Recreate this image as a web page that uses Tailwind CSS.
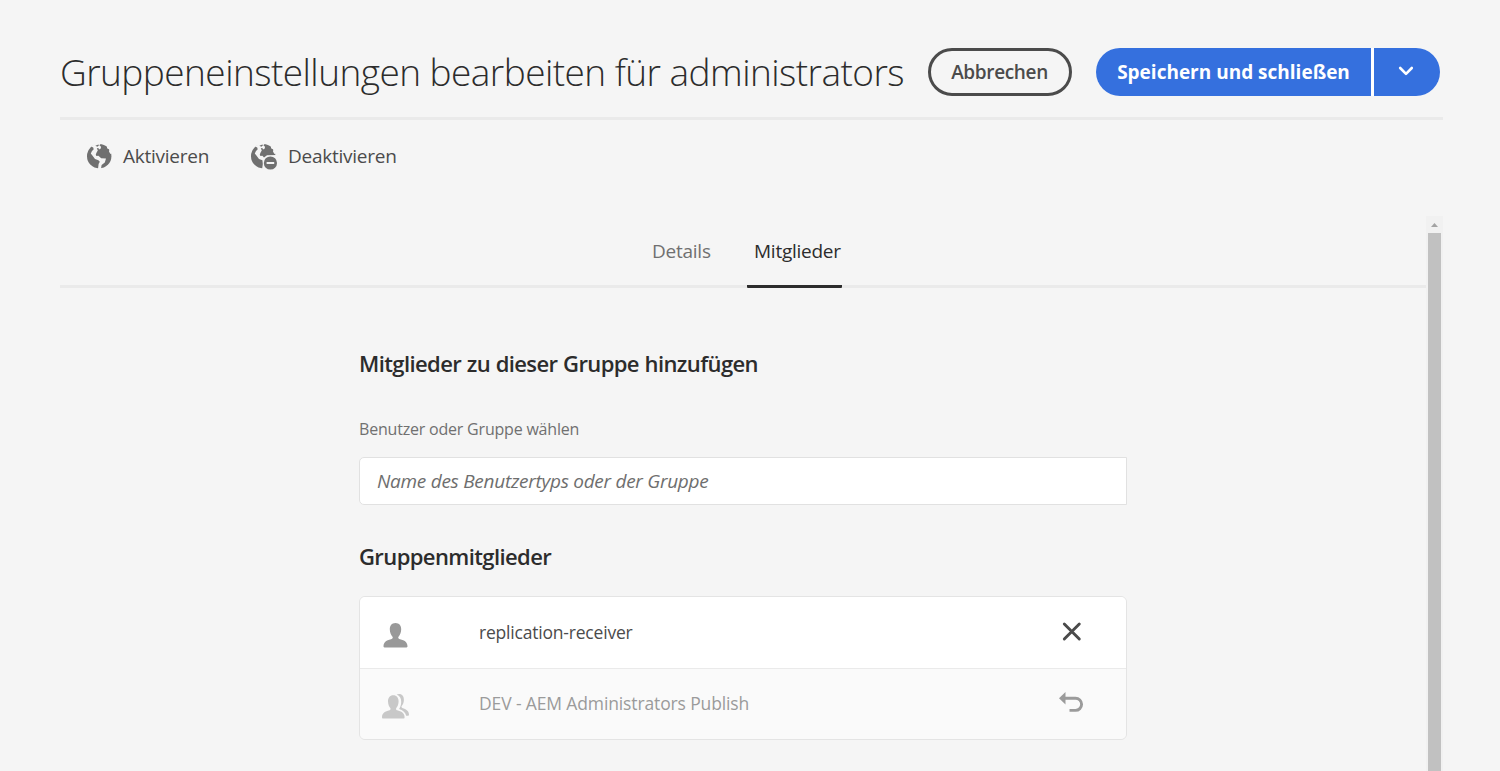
<!DOCTYPE html>
<html lang="de">
<head>
<meta charset="utf-8">
<title>Gruppeneinstellungen bearbeiten</title>
<script src="https://cdn.jsdelivr.net/npm/@tailwindcss/browser@4"></script>
</head>
<body class="flex h-screen flex-col overflow-hidden bg-[#f5f5f5] pl-[60px] pr-[57px] font-['Open_Sans',sans-serif] text-[#4b4b4b]">
  <header class="flex h-[120px] shrink-0 items-start border-b-3 border-[#eaeaea] pt-12 pr-[3px]">
    <h1 class="w-[868px] whitespace-nowrap text-[37px] leading-[48px] font-light tracking-[-0.55px] text-[#2c2c2c]">Gruppeneinstellungen bearbeiten für administrators</h1>
    <button class="h-12 w-36 shrink-0 rounded-full border-3 border-[#4b4b4b] pr-px text-center text-[19px] leading-[39px] font-semibold tracking-[-0.35px]">Abbrechen</button>
    <div class="ml-6 flex h-12 w-[344px] shrink-0 gap-[3px] overflow-hidden rounded-full bg-white text-white">
      <button class="w-[275px] bg-[#3570de] text-[19px] leading-[46px] font-bold">Speichern und schließen</button>
      <button class="flex flex-1 items-center justify-center bg-[#3570de]">
        <svg class="mr-[3px] mb-[3px]" width="16" height="10" viewBox="0 0 16 10" fill="none" stroke="currentColor" stroke-width="2.6" stroke-linecap="round" stroke-linejoin="round"><path d="M2.200 2 8 7.800 13.800 2"/></svg>
      </button>
    </div>
  </header>

  <div class="flex h-24 shrink-0 items-start pt-[23px] pl-[27px] text-[19px] leading-[26px] tracking-[-0.25px]">
    <button class="flex w-[164px] gap-[11px]">
      <svg class="mt-px" width="25" height="25" viewBox="0 0 25 25"><circle cx="12.2" cy="12.2" r="12.2" fill="#707070"/><path fill="#f5f5f5" d="M4.500 2.600 7.600 0H13.500L12.400 1.300 14 2.800 13.800 4.600 12 5.600 11.400 4 9.800 4.200 10.800 6.600 9.600 8.600 8.800 10.600 9.400 12 11.400 11.800 14.200 14.200 19 14.400 17.800 18.400 14.600 21 14 25H11L11.600 20 12.800 17.800 11.400 16.200 8 15 5.400 11.600 3.800 9.400 5 7 6.600 5.600 6.400 3.800Z"/><path fill="#707070" d="M8.400 1.800 11.400.4 12 1.200 10.400 2.800Z"/><path fill="#f5f5f5" d="M20 4.200 22.400 5.600 22 7.400 23.400 10 25 9V3H20Z"/></svg>
      Aktivieren
    </button>
    <button class="flex gap-[11px]">
      <svg class="mt-px" width="26" height="26" viewBox="0 0 26 26"><circle cx="12.2" cy="12.2" r="12.2" fill="#707070"/><path fill="#f5f5f5" d="M4.500 2.600 7.600 0H13.500L12.400 1.300 14 2.800 13.800 4.600 12 5.600 11.400 4 9.800 4.200 10.800 6.600 9.600 8.600 8.800 10.600 9.400 12 11.400 11.800 13 13.500 16 11.200 26 11V26H11L11.800 20 11.400 16.200 8 15 5.400 11.600 3.800 9.400 5 7 6.600 5.600 6.400 3.800Z"/><path fill="#707070" d="M8.400 1.800 11.400.4 12 1.200 10.400 2.800Z"/><path fill="#f5f5f5" d="M20 4.200 22.400 5.600 22 7.400 23.400 10 25 9V3H20Z"/><circle cx="19.400" cy="19" r="6.600" fill="#707070"/><path d="M15.600 19h7.600" stroke="#f5f5f5" stroke-width="2"/></svg>
      Deaktivieren
    </button>
  </div>

  <div class="flex min-h-0 flex-1">
    <main class="flex-1">
      <nav class="flex h-[72px] items-stretch justify-center gap-9 border-b-3 border-[#eaeaea] pt-[22px] pl-2 text-[19px] leading-[26px] tracking-[-0.25px]">
        <a class="w-[59px] text-[#707070]">Details</a>
        <a class="-mb-[3px] w-[95px] rounded-b-[1px] border-b-3 border-[#2c2c2c] pl-[7px] text-[#2c2c2c]">Mitglieder</a>
      </nav>
      <section class="ml-[299px] w-[768px]">
        <h2 class="pt-[59px] text-[22px] leading-8 font-semibold tracking-[-0.6px] [word-spacing:0.5px] text-[#2c2c2c]">Mitglieder zu dieser Gruppe hinzufügen</h2>
        <label class="mt-[38px] block text-[16px] leading-6 tracking-[-0.2px] text-[#707070]">Benutzer oder Gruppe wählen</label>
        <input class="mt-4 block h-12 w-full rounded-l-[5px] border border-[#e1e1e1] bg-white px-[17px] text-[19px] tracking-[-0.27px] italic placeholder:text-[#6e6e6e]" placeholder="Name des Benutzertyps oder der Gruppe">
        <h2 class="mt-[35px] text-[22px] leading-8 font-semibold tracking-[-0.6px] text-[#2c2c2c]">Gruppenmitglieder</h2>
        <ul class="mt-6 overflow-hidden rounded-md border border-[#e4e4e4] text-[17.5px] tracking-[-0.2px]">
          <li class="flex h-[72px] items-center border-b border-[#eaeaea] bg-white pr-[43px] pl-[23px]">
            <svg class="mt-[6px]" width="25" height="25" viewBox="0 0 24 25" fill="#999"><path d="M12 0c3.800 0 5.700 2.800 5.700 6.300 0 3.200-1.200 5.800-2.700 7.500-.6.800-.2 1.900.8 2.200C20.300 17 24 18.800 24 23.300c0 .7-.3 1.200-1 1.200H1c-.7 0-1-.5-1-1.200C0 18.800 3.700 17 8.200 16c1-.3 1.400-1.400.8-2.200-1.500-1.700-2.700-4.300-2.700-7.500C6.300 2.800 8.200 0 12 0Z"/></svg>
            <span class="ml-[71px] flex-1">replication-receiver</span>
            <svg class="mb-[3px]" width="22" height="22" viewBox="0 0 22 22" fill="none" stroke="#4b4b4b" stroke-width="2.900" stroke-linecap="round"><path d="M3.300 4 18.300 19M18.300 4 3.300 19"/></svg>
          </li>
          <li class="flex h-[70px] items-center bg-[#fafafa] pr-[42px] pl-[22px] text-[#9b9b9b]">
            <svg class="mt-1" width="27" height="25" viewBox="0 0 27 25" fill="#c8c8c8"><path d="M11.300 1.200c3.500 0 5.300 2.700 5.300 6 0 3-1 5.300-2.300 6.800-.6.800-.2 2 .8 2.300 4.300.9 7.500 2.800 7.500 7 0 .8-.4 1.200-1 1.200H1c-.6 0-1-.4-1-1.200 0-4.200 3.200-6.100 7.500-7 1-.3 1.400-1.500.8-2.300C7 12.500 6 10.200 6 7.200c0-3.300 1.800-6 5.300-6Z"/><path d="M14.700.6C15.300.2 16 0 17 0c3.400 0 4.900 2.700 4.900 5.800 0 2.800-1 4.900-2.200 6.300-.5.700-.2 1.600.6 2 4 1.400 6.700 3 6.700 6.700 0 .7-.3 1-.9 1h-1.900c-1-3.600-3.500-5.500-7.100-6.700 1.200-1.800 2.100-4.200 2.100-7.300 0-3.300-1.500-6-4.500-7.200Z"/></svg>
            <span class="mb-[2px] ml-[70px] flex-1 tracking-[-0.13px]">DEV - AEM Administrators Publish</span>
            <svg class="mb-1" width="25" height="20" viewBox="0 0 25 20"><path fill="#9b9b9b" d="M0 6.200 6.500 0v12.400Z"/><path fill="none" stroke="#9b9b9b" stroke-width="2.900" d="M5 6.200h11.500a6.100 6.100 0 0 1 0 12.200H10.500"/></svg>
          </li>
        </ul>
      </section>
    </main>
    <div class="flex w-[17px] flex-col items-center bg-[#f1f1f1]">
      <svg class="mt-[7px] shrink-0" width="7" height="4" viewBox="0 0 7 4"><path fill="#a3a3a3" d="M0 4 3.500 0 7 4Z"/></svg>
      <div class="mt-[6px] w-[13px] flex-1 bg-[#c1c1c1]"></div>
    </div>
  </div>
</body>
</html>
